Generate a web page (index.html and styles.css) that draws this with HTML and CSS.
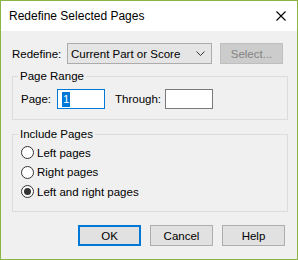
FILE: index.html
```html
<!DOCTYPE html>
<html lang="en">
<head>
  <meta charset="UTF-8">
  <title>Redefine Selected Pages</title>
  <link rel="stylesheet" href="styles.css">
</head>
<body>

  <div class="window">
    <div class="titlebar">
      <span class="title">Redefine Selected Pages</span>
      <svg class="close" width="10" height="10" viewBox="0 0 10 10">
        <path d="M0.5 0.5 L9.5 9.5 M9.5 0.5 L0.5 9.5" stroke="#000" stroke-width="1.1" fill="none"/>
      </svg>
    </div>

    <div class="content">
      <div class="redefine-row">
        <span class="label">Redefine:</span>
        <div class="dropdown">
          <span>Current Part or Score</span>
          <svg width="9" height="5" viewBox="0 0 9 5">
            <path d="M0.5 0.5 L4.5 4.5 L8.5 0.5" stroke="#333" stroke-width="1" fill="none"/>
          </svg>
        </div>
        <button class="btn disabled">Select...</button>
      </div>

      <fieldset class="group range">
        <legend>Page Range</legend>
        <div class="range-row">
          <span class="label">Page:</span>
          <div class="field focused"><span class="sel">1</span></div>
          <span class="label through">Through:</span>
          <div class="field"></div>
        </div>
      </fieldset>

      <fieldset class="group include">
        <legend>Include Pages</legend>
        <div class="radio"><span class="dot"></span>Left pages</div>
        <div class="radio"><span class="dot"></span>Right pages</div>
        <div class="radio"><span class="dot checked"></span>Left and right pages</div>
      </fieldset>

      <div class="buttons">
        <button class="btn default">OK</button>
        <button class="btn">Cancel</button>
        <button class="btn">Help</button>
      </div>
    </div>
  </div>

</body>
</html>
```

FILE: styles.css
```css
body {
  margin: 0;
  font-family: 'Liberation Sans', Arial, sans-serif;
  font-size: 11.5px;
  color: #000;
}

.window {
  width: 298px;
  height: 260px;
  box-sizing: border-box;
  border: 1px solid #8ab545;
  background: #f0f0f0;
  display: flex;
  flex-direction: column;
}

.titlebar {
  height: 30px;
  background: #fff;
  display: flex;
  align-items: center;
  justify-content: space-between;
  padding: 0 10px 0 8px;
}

.title {
  font-size: 12px;
}

.close {
  margin-right: 1px;
}

.content {
  padding: 12px 9px 0 11px;
}

.redefine-row {
  display: flex;
  align-items: center;
  height: 21px;
}

.redefine-row .label {
  width: 55px;
}

.dropdown {
  width: 145px;
  height: 21px;
  box-sizing: border-box;
  border: 1px solid #acacac;
  background: #e5e5e5;
  display: flex;
  align-items: center;
  justify-content: space-between;
  padding: 0 6px 0 3px;
}

.btn {
  width: 63px;
  height: 21px;
  box-sizing: border-box;
  border: 1px solid #adadad;
  background: #e1e1e1;
  font-family: inherit;
  font-size: 11.5px;
  color: #000;
  padding: 0;
}

.btn.disabled {
  margin-left: 8px;
  background: #cccccc;
  border-color: #bfbfbf;
  color: #838383;
}

.btn.default {
  border: 2px solid #0078d7;
}

.group {
  margin: 0;
  border: 1px solid #dcdcdc;
  padding: 0 8px;
}

.group legend {
  padding: 0 2px;
  margin-left: -3px;
}

.range {
  margin-top: 6px;
  height: 50px;
  box-sizing: border-box;
}

.range-row {
  display: flex;
  align-items: center;
  margin-top: 7px;
}

.range-row .label {
  width: 36px;
}

.range-row .through {
  width: 50px;
  margin-left: 10px;
}

.field {
  width: 48px;
  height: 20px;
  box-sizing: border-box;
  border: 1px solid #7a7a7a;
  background: #fff;
  display: flex;
  align-items: center;
  padding-left: 4px;
}

.field.focused {
  border-color: #0078d7;
}

.sel {
  background: #0078d7;
  color: #fff;
  padding: 0 1px;
  line-height: 15px;
}

.include {
  margin-top: 8px;
  height: 84px;
  box-sizing: border-box;
  padding-top: 3px;
}

.radio {
  display: flex;
  align-items: center;
  height: 19.5px;
}

.dot {
  width: 13px;
  height: 13px;
  box-sizing: border-box;
  border: 1px solid #333;
  border-radius: 50%;
  background: #fff;
  margin-right: 3px;
  display: flex;
  align-items: center;
  justify-content: center;
}

.dot.checked::after {
  content: '';
  width: 7px;
  height: 7px;
  border-radius: 50%;
  background: #333;
}

.buttons {
  display: flex;
  justify-content: flex-end;
  gap: 9px;
  margin-top: 13px;
  padding-right: 3px;
}
```
